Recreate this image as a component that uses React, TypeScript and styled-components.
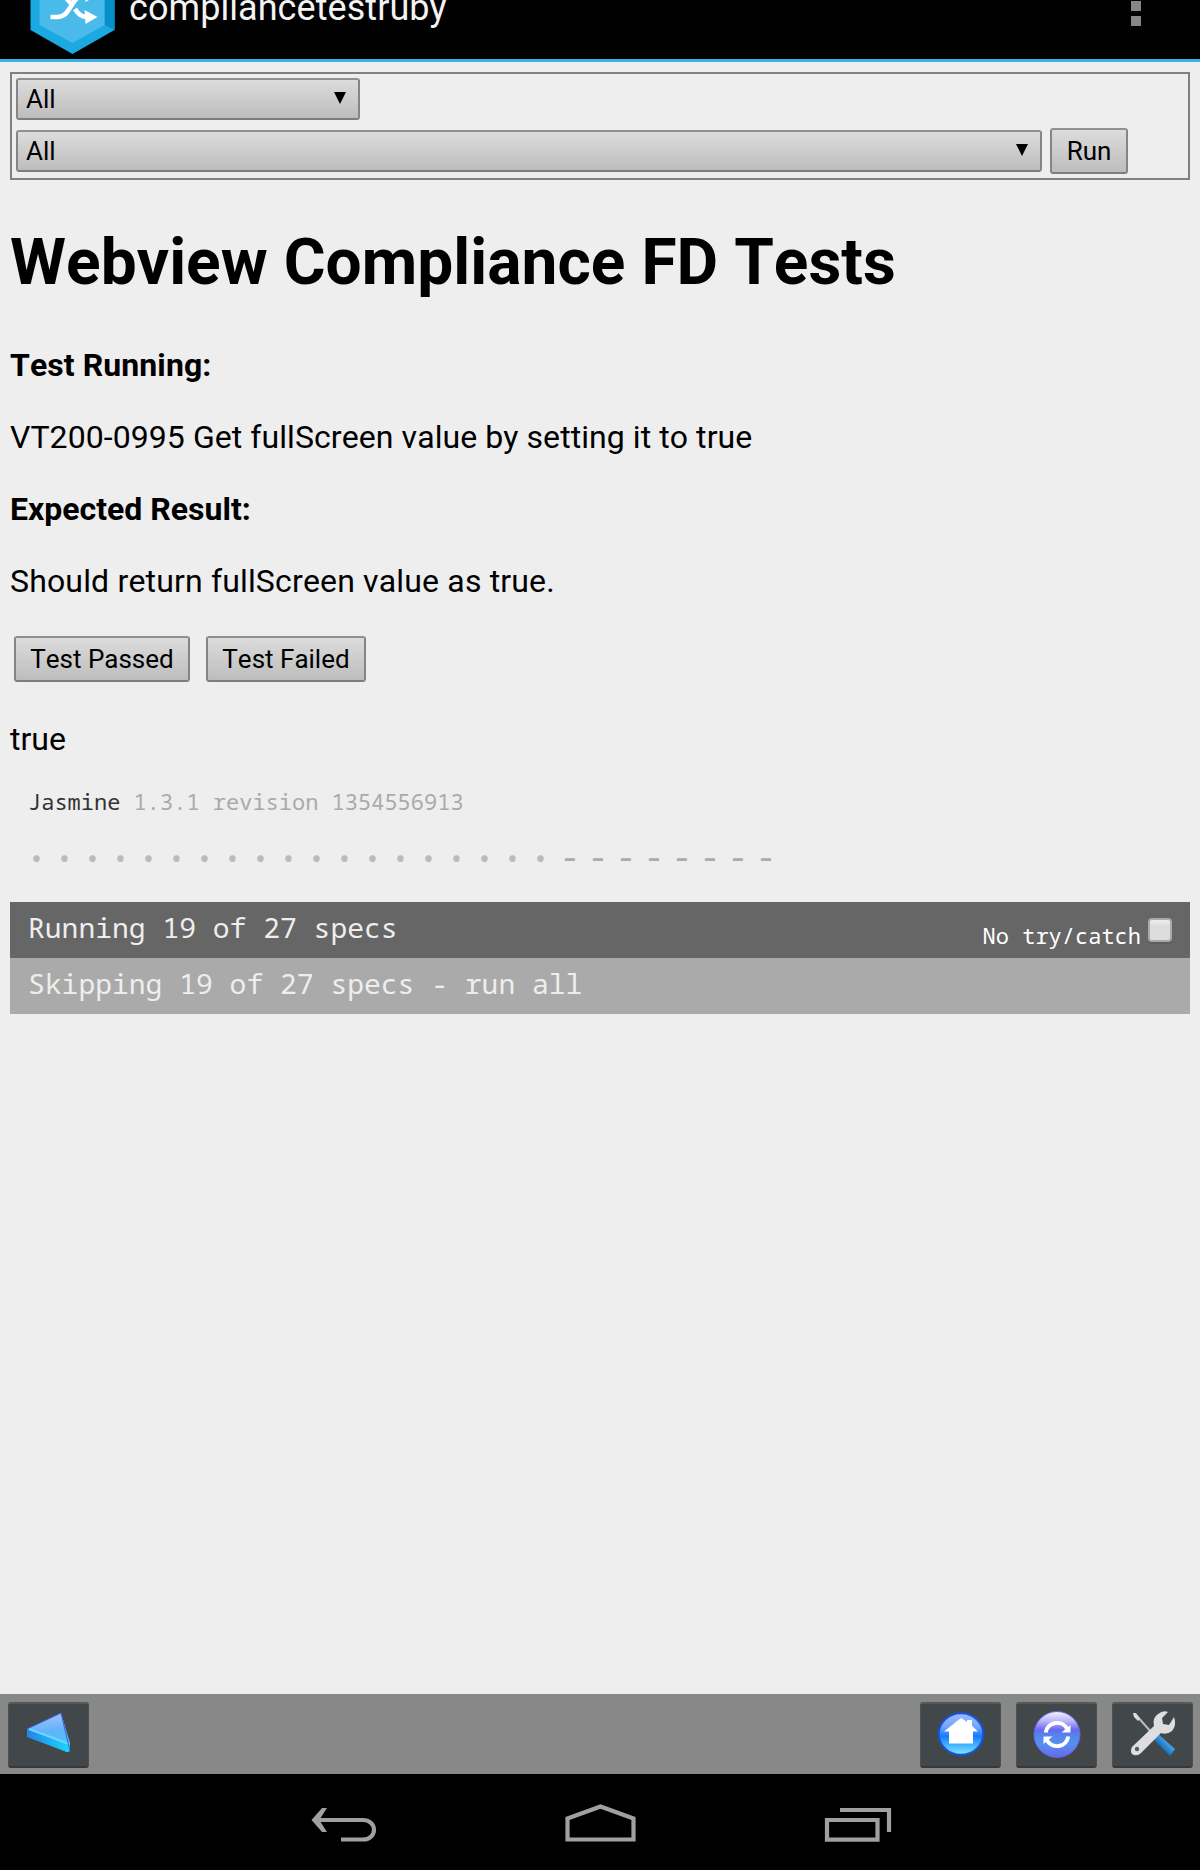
import React from "react";
import styled, { createGlobalStyle } from "styled-components";

const Global = createGlobalStyle`
  *, *::before, *::after { box-sizing: border-box; }
  body { margin: 0; background: #eee; color: #000; font-family: Roboto, "Liberation Sans", sans-serif; font-kerning: none; }
  svg { display: block; }
`;

const mono = `"Droid Sans Mono", "Noto Sans Mono", "DejaVu Sans Mono", monospace`;

const Screen = styled.div`
  display: flex;
  flex-direction: column;
  width: 1200px;
  height: 1870px;
  overflow: hidden;
`;

const ActionBar = styled.header`
  display: flex;
  align-items: flex-start;
  height: 62px;
  flex: none;
  background: #000;
  border-bottom: 3px solid #33b5e5;
  padding: 0 59px 0 30px;
`;

const AppTitle = styled.div`
  margin: -14px 0 0 13px;
  font-size: 36px;
  line-height: 44px;
  letter-spacing: 0.06px;
  color: #f3f3f3;
`;

const Overflow = styled.div`
  display: flex;
  flex-direction: column;
  gap: 5px;
  margin: 1px 0 0 auto;
`;

const OverflowDot = styled.i`
  width: 10px;
  height: 10px;
  background: #868686;
`;

const Content = styled.main`
  display: flex;
  flex-direction: column;
  flex: 1;
  padding: 10px 10px 0;
`;

const Filters = styled.section`
  display: flex;
  flex-direction: column;
  align-items: flex-start;
  gap: 8px;
  height: 108px;
  padding: 4px;
  border: 2px solid #808080;
`;

const FilterRow = styled.div`
  display: flex;
  align-items: center;
  gap: 8px;
`;

const Control = styled.button`
  display: flex;
  align-items: center;
  justify-content: center;
  flex: none;
  margin: 0;
  padding: 0;
  font: 26px Roboto, "Liberation Sans", sans-serif;
  font-kerning: none;
  line-height: 32px;
  color: #000;
  border: 2px solid;
  border-color: #909090 #858585 #7d7d7d;
  border-radius: 3px;
  background: linear-gradient(#dcdcdc, #bdbdbd);
`;

const Picker = styled(Control)<{ $width: number }>`
  justify-content: space-between;
  width: ${(p) => p.$width}px;
  height: 42px;
  padding: 0 12px 0 8px;
`;

const PickerArrow = styled.i`
  margin-bottom: 2px;
  border: 6px solid transparent;
  border-top: 12px solid #000;
  border-bottom: 0;
`;

const PushButton = styled(Control)<{ $width: number }>`
  width: ${(p) => p.$width}px;
  height: 46px;
`;

const Title = styled.h1`
  margin: 45px 0 44px;
  font-size: 64px;
  line-height: 76px;
  font-weight: 700;
  letter-spacing: 0.04px;
  white-space: nowrap;
`;

const Line = styled.p<{ $strong?: boolean; $tracking?: number }>`
  margin: 0 0 32px;
  font-size: 32px;
  line-height: 40px;
  font-weight: ${(p) => (p.$strong ? 700 : 400)};
  letter-spacing: ${(p) => p.$tracking ?? 0}px;
  white-space: nowrap;
`;

const Verdict = styled.div`
  display: flex;
  gap: 16px;
  margin: 3px 0 37px 4px;
`;

const Reporter = styled.section`
  display: flex;
  flex-direction: column;
  margin-top: -5px;
  font-family: ${mono};
`;

const Banner = styled.div`
  padding-left: 18px;
  font-size: 22px;
  line-height: 30px;
  color: #aaa;
  white-space: pre;
`;

const Product = styled.span`
  color: #333;
`;

const Symbols = styled.ul`
  display: flex;
  margin: 28px 0 30px;
  padding: 0 0 0 18px;
  height: 28px;
  list-style: none;
`;

const Symbol = styled.li<{ $pending?: boolean }>`
  width: 28px;
  font-size: ${(p) => (p.$pending ? 33 : 28)}px;
  line-height: ${(p) => (p.$pending ? 25 : 28)}px;
  color: ${(p) => (p.$pending ? "#aaa" : "#bababa")};
`;

const Alert = styled.div<{ $tone: string }>`
  display: flex;
  justify-content: space-between;
  height: 56px;
  padding: 0 18px;
  font-size: 28px;
  line-height: 51px;
  color: #eee;
  background: ${(p) => p.$tone};
`;

const Exceptions = styled.label`
  display: flex;
  align-items: flex-start;
  gap: 7px;
  font-size: 22px;
  line-height: 66px;
  color: #fff;
`;

const Tick = styled.i`
  width: 24px;
  height: 24px;
  margin-top: 16px;
  border: 2px solid #aaa;
  border-radius: 4px;
  background: linear-gradient(#ededed, #dcdcdc 35%, #dedede);
  box-shadow: 0 2px 0 #5c5c5c;
`;

const Toolbar = styled.nav`
  display: flex;
  align-items: flex-start;
  gap: 15px;
  height: 80px;
  flex: none;
  padding: 8px 7.5px 0;
  background: #888;
`;

const Tool = styled.button<{ $push?: boolean }>`
  display: grid;
  place-items: center;
  width: 81px;
  height: 66px;
  padding: 0;
  margin-left: ${(p) => (p.$push ? "auto" : "0")};
  border: 1px solid #4b5053;
  border-top: 2px solid #55595c;
  border-bottom: 2px solid #35393c;
  border-radius: 3px;
  background: #42474a;
`;

const SystemBar = styled.footer`
  display: flex;
  justify-content: center;
  align-items: flex-start;
  height: 96px;
  flex: none;
  padding: 28px 0 0 1px;
  gap: 187px;
  background: #000;
`;

const Logo = () => (
  <svg width="86" height="56" viewBox="30.500 0 86 56">
    <path d="M31-20h84v50L73 54 31 30z" fill="#1ba9e1" />
    <path d="M105-20h10v50l-10-5z" fill="#0590ca" />
    <path d="M40-20h65v45L73 43 40 25z" fill="#4abaea" />
    <g fill="none" stroke="#fff" strokeWidth="4.600">
      <path d="M51 17h7c5 0 8-2 11-7l6-9c3-4 6-6 13-6" />
      <path d="M65-4l7 8M75.500 9c3 5 6 8 12 8" />
    </g>
    <path d="M86-11l12 6-12 7zM85 10l13 7-12 7z" fill="#fff" />
  </svg>
);

const BackArrow = () => (
  <svg width="80" height="62" viewBox="8 1703 80 62">
    <defs>
      <linearGradient id="face" x1=".5" y1="0" x2=".6" y2="1">
        <stop offset="0" stopColor="#a9bdf8" />
        <stop offset=".45" stopColor="#62b4fa" />
        <stop offset="1" stopColor="#40c8ff" />
      </linearGradient>
      <linearGradient id="edge">
        <stop offset="0" stopColor="#2484e8" />
        <stop offset="1" stopColor="#19d8fb" />
      </linearGradient>
    </defs>
    <path d="M26 1728l34-16 9 30v8l-3 1-40-16z" fill="url(#face)" />
    <path d="M26 1728l5 1 37 14 1 7-3 1-40-15z" fill="url(#edge)" />
    <path d="M28 1728l40 15" stroke="#71d5ff" strokeWidth="2" />
    <path d="M26 1728l34-16 9 38" fill="none" stroke="#2b65df" strokeWidth="1" />
  </svg>
);

const HomeOrb = () => (
  <svg width="80" height="62" viewBox="920 1703.500 80 62">
    <defs>
      <linearGradient id="homeBall" x2="0" y2="1">
        <stop offset="0" stopColor="#9dbdff" />
        <stop offset=".35" stopColor="#6fa2fd" />
        <stop offset=".55" stopColor="#147bff" />
        <stop offset="1" stopColor="#7cecff" />
      </linearGradient>
    </defs>
    <ellipse cx="960" cy="1733.5" rx="22.2" ry="20.8" fill="url(#homeBall)" stroke="#1554d8" strokeWidth="2" />
    <path d="M960 1717.500l6 4v-2h5v6l6 5.500h-5v12h-24v-12h-5z" fill="#fff" />
  </svg>
);

const RefreshOrb = () => (
  <svg width="80" height="62" viewBox="1016 1703.500 80 62">
    <defs>
      <linearGradient id="syncBall" x2="0" y2="1">
        <stop offset="0" stopColor="#f4f3ff" />
        <stop offset=".22" stopColor="#b5b0fb" />
        <stop offset=".4" stopColor="#6768f2" />
        <stop offset=".52" stopColor="#5585ec" />
        <stop offset=".7" stopColor="#5790f0" />
        <stop offset="1" stopColor="#6668e8" />
      </linearGradient>
    </defs>
    <circle cx="1056" cy="1734" r="23" fill="url(#syncBall)" stroke="#6565df" strokeWidth="1" />
    <path
      d="M1044.700 1732a11.500 11.500 0 0 1 21.500-3.500M1067.300 1736a11.500 11.500 0 0 1-21.500 3.500"
      fill="none"
      stroke="#fff"
      strokeWidth="4"
    />
    <path d="M1069.500 1724.500v7.500h-9zM1042.500 1743.500v-7.500h9z" fill="#fff" />
  </svg>
);

const Wrench = () => (
  <svg width="80" height="62" viewBox="1112 1703 80 62">
    <defs>
      <linearGradient id="grip" x1="0" y1="1" x2="1" y2="0">
        <stop offset=".35" stopColor="#1768ae" />
        <stop offset=".6" stopColor="#3f9be6" />
      </linearGradient>
    </defs>
    <path d="M1135 1714l16 18" stroke="#b8bcbe" strokeWidth="2" />
    <path d="M1132 1712l3 0 4 6-2 2-4-4z" fill="#d9dcdc" />
    <path d="M1156 1732l18 16-5 7-17-17z" fill="url(#grip)" />
    <path d="M1130 1750q0-4 3-6l20-19q-2-8 4-12 5-4 10-2l-6 6 1 6 6 1 5-8q3 8-2 14-5 4-11 2l-20 20q-3 3-7 2-3-1-3-4z" fill="#dedede" />
    <circle cx="1136" cy="1748" r="2.2" fill="#555b5e" />
  </svg>
);

const NavBack = () => (
  <svg width="68" height="40" viewBox="310 1802 68 40">
    <path d="M316 1820h47c6 0 11 4 11 9.8s-5 9.7-11 9.7h-22" fill="none" stroke="#a0a0a0" strokeWidth="4.2" />
    <path d="M322 1808h5l-7.700 12 7.700 12h-5l-10.500-12z" fill="#a0a0a0" />
  </svg>
);

const NavHome = () => (
  <svg width="72" height="40" viewBox="564.500 1802 72 40">
    <path d="M567 1839.500v-21l33-12 33 12v21z" fill="none" stroke="#a0a0a0" strokeWidth="4.200" />
  </svg>
);

const NavRecents = () => (
  <svg width="68" height="40" viewBox="824 1802 68 40">
    <path d="M827 1820h50.500v19.600H827zM840 1810h49v22" fill="none" stroke="#a0a0a0" strokeWidth="4.200" />
  </svg>
);

const symbols = Array.from({ length: 27 }, (_, i) => i >= 19);

export default function App() {
  return (
    <Screen>
      <Global />
      <ActionBar>
        <Logo />
        <AppTitle>compliancetestruby</AppTitle>
        <Overflow>
          <OverflowDot />
          <OverflowDot />
        </Overflow>
      </ActionBar>
      <Content>
        <Filters>
          <FilterRow>
            <Picker $width={344}>
              All
              <PickerArrow />
            </Picker>
          </FilterRow>
          <FilterRow>
            <Picker $width={1026}>
              All
              <PickerArrow />
            </Picker>
            <PushButton $width={78}>Run</PushButton>
          </FilterRow>
        </Filters>
        <Title>Webview Compliance FD Tests</Title>
        <Line $strong $tracking={0.08}>
          Test Running:
        </Line>
        <Line $tracking={0.07}>VT200-0995 Get fullScreen value by setting it to true</Line>
        <Line $strong>Expected Result:</Line>
        <Line $tracking={0.16}>Should return fullScreen value as true.</Line>
        <Verdict>
          <PushButton $width={176}>Test Passed</PushButton>
          <PushButton $width={160}>Test Failed</PushButton>
        </Verdict>
        <Line>true</Line>
        <Reporter>
          <Banner>
            <Product>Jasmine</Product> 1.3.1 revision 1354556913
          </Banner>
          <Symbols>
            {symbols.map((pending, i) => (
              <Symbol key={i} $pending={pending}>
                {pending ? "-" : "•"}
              </Symbol>
            ))}
          </Symbols>
          <Alert $tone="#666">
            Running 19 of 27 specs
            <Exceptions>
              No try/catch
              <Tick />
            </Exceptions>
          </Alert>
          <Alert $tone="#aaa">Skipping 19 of 27 specs - run all</Alert>
        </Reporter>
      </Content>
      <Toolbar>
        <Tool>
          <BackArrow />
        </Tool>
        <Tool $push>
          <HomeOrb />
        </Tool>
        <Tool>
          <RefreshOrb />
        </Tool>
        <Tool>
          <Wrench />
        </Tool>
      </Toolbar>
      <SystemBar>
        <NavBack />
        <NavHome />
        <NavRecents />
      </SystemBar>
    </Screen>
  );
}
